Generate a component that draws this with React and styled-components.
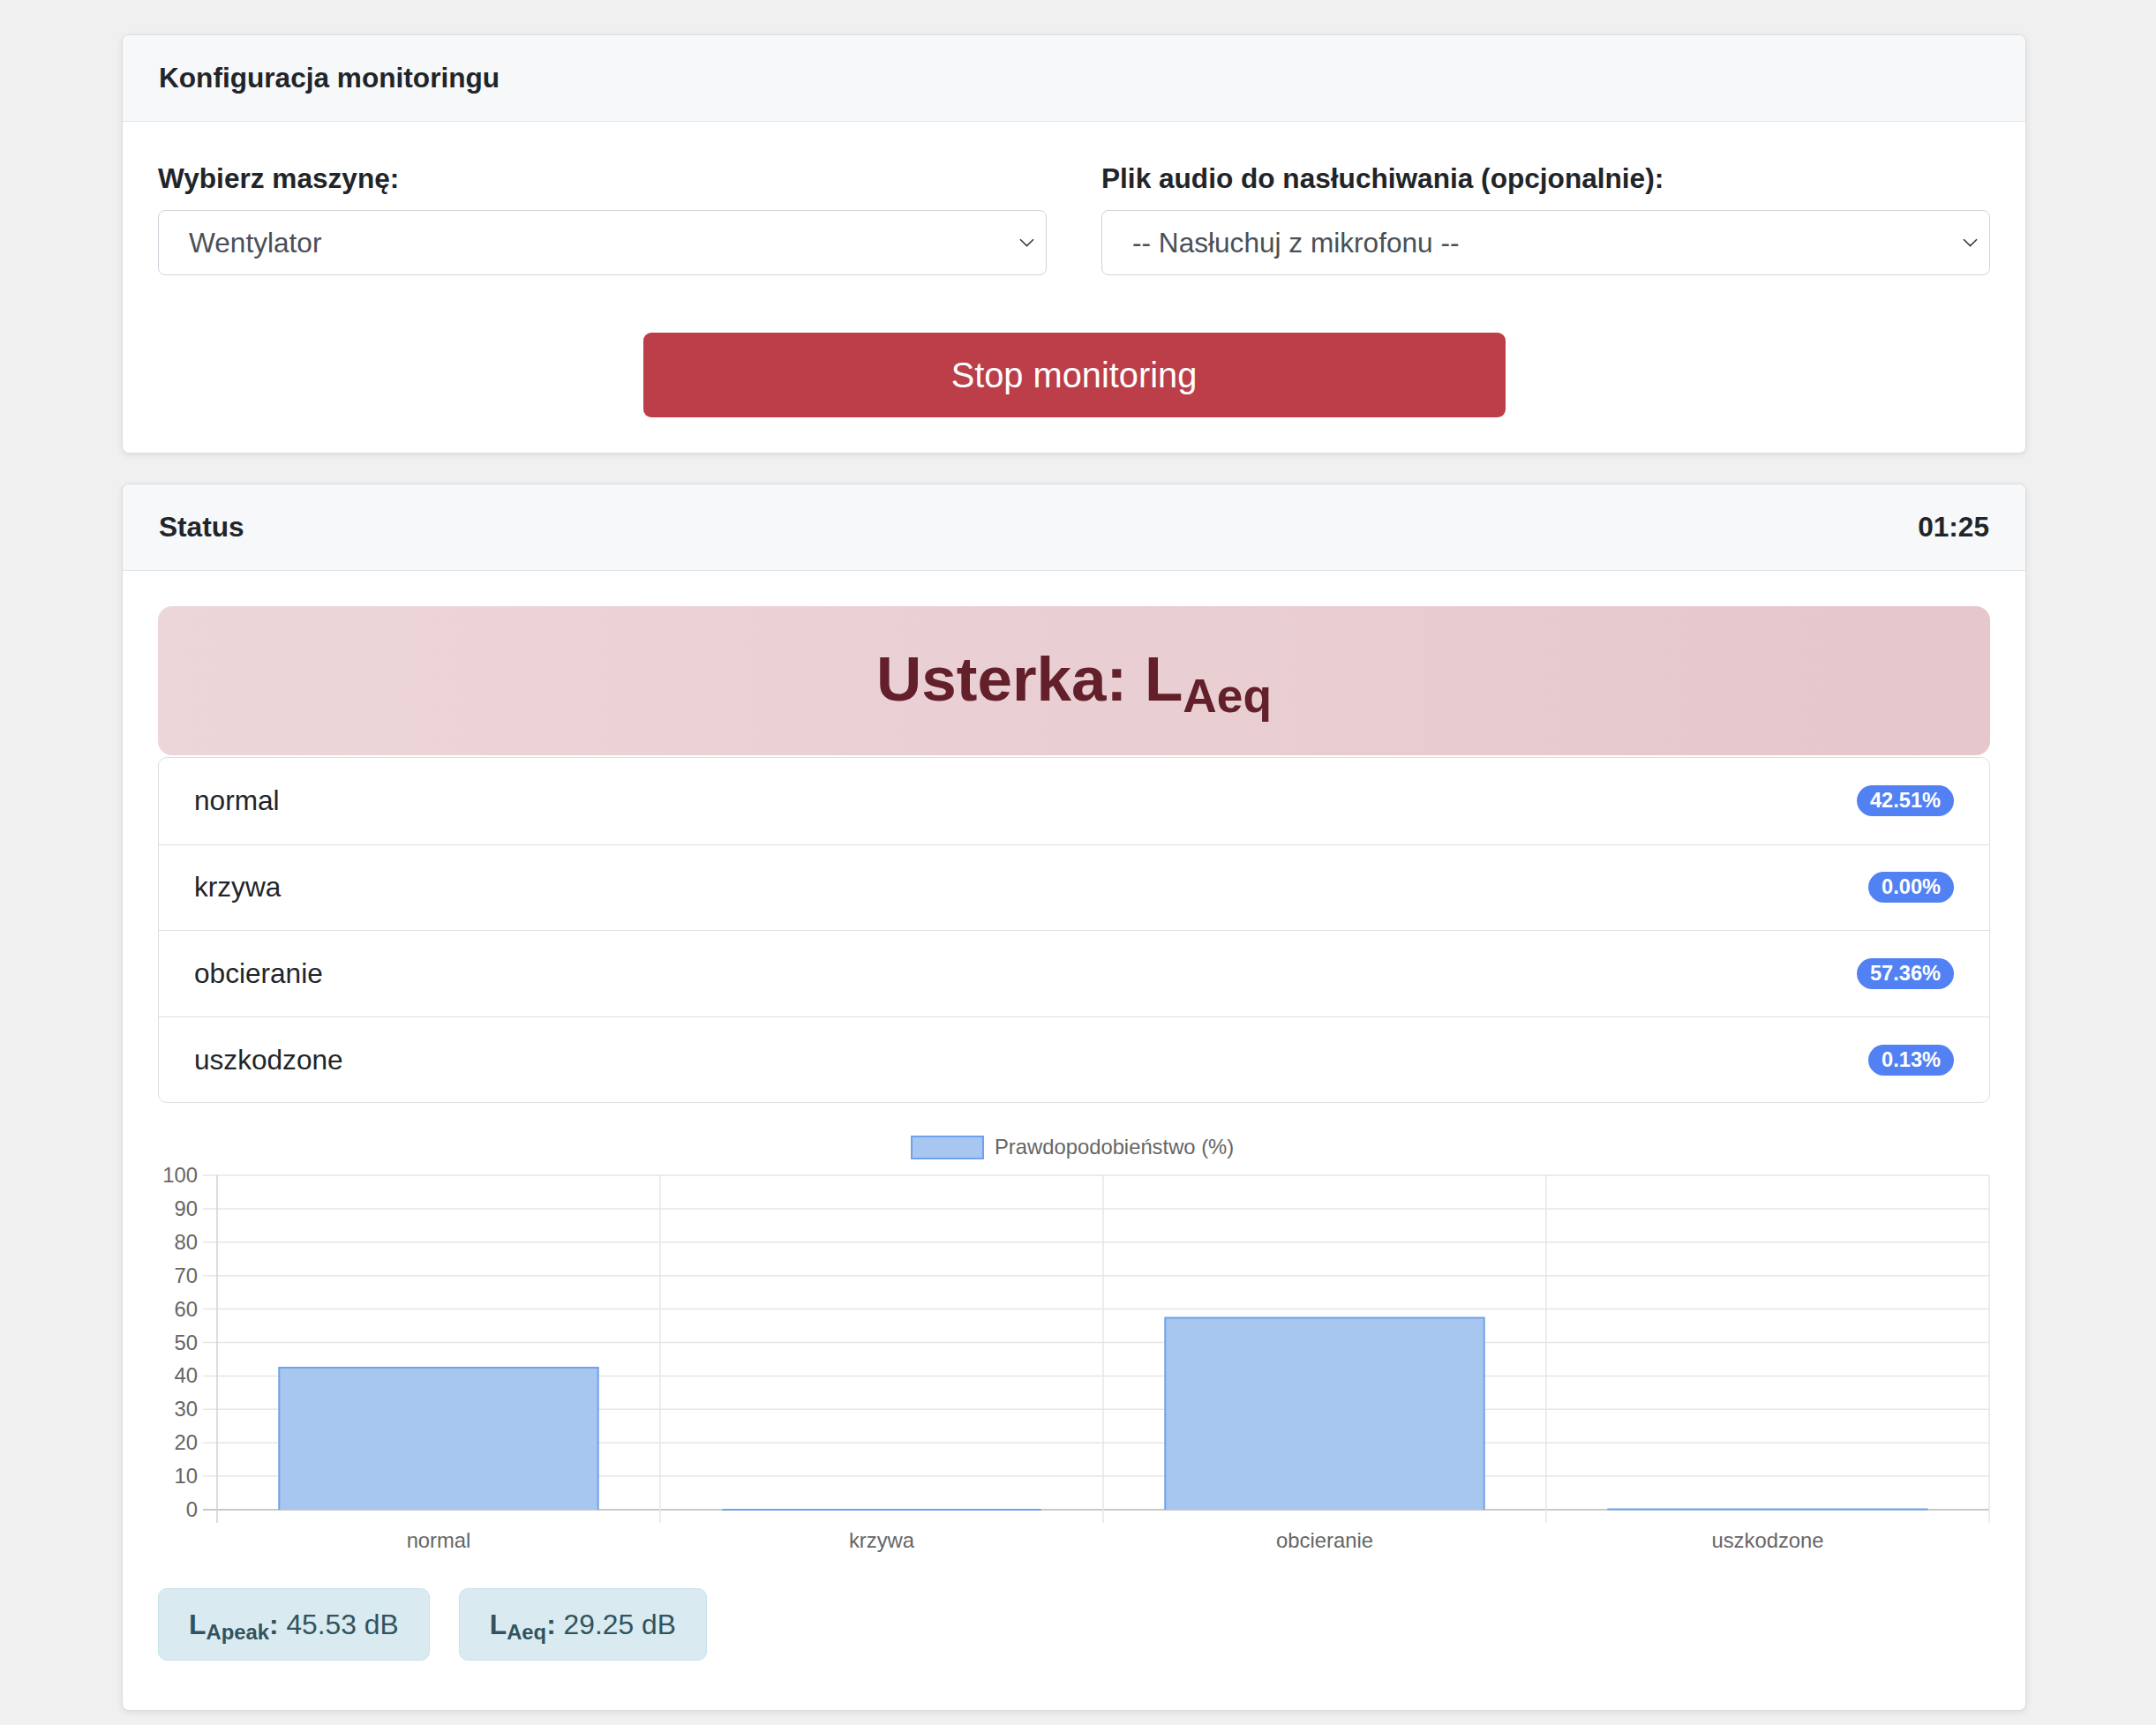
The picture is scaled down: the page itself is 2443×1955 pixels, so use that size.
import React from 'react';
import styled, { createGlobalStyle } from 'styled-components';

const BASE = '31.6px';

const GlobalStyle = createGlobalStyle`
  html, body {
    margin: 0;
    padding: 0;
    background: #f0f0f0;
  }
  body {
    font-family: 'Liberation Sans', Arial, sans-serif;
    font-size: ${BASE};
    color: #212529;
  }
  * {
    box-sizing: border-box;
  }
`;

const Page = styled.div`
  padding: 39px 9px 40px 0;
`;

const Container = styled.div`
  width: 2158px;
  margin: 0 auto;
  display: flex;
  flex-direction: column;
  gap: 34px;
`;

const Card = styled.section`
  background: #fff;
  border: 1.5px solid #dcdcdc;
  border-radius: 8px;
  box-shadow: 0 2px 7px rgba(0, 0, 0, 0.08);
  overflow: hidden;
`;

const CardHeader = styled.header`
  height: 98px;
  padding: 0 41px;
  display: flex;
  align-items: center;
  justify-content: space-between;
  background: #f7f8fa;
  border-bottom: 1.5px solid #e1e3e6;
  font-weight: 700;
  font-size: ${BASE};
  color: #212529;
`;

const CardBody = styled.div`
  padding: ${props => (props.bottom ? `40px 40px ${props.bottom}` : '40px')};
`;

const FormRow = styled.div`
  display: grid;
  grid-template-columns: 1fr 1fr;
  column-gap: 62px;
`;

const Field = styled.div`
  display: flex;
  flex-direction: column;
`;

const Label = styled.label`
  font-weight: 700;
  line-height: 47px;
  margin-bottom: 12px;
  padding-top: 1px;
`;

const SelectBox = styled.div`
  height: 74px;
  display: flex;
  align-items: center;
  justify-content: space-between;
  padding: 0 13px 0 34px;
  border: 1.5px solid #ced4da;
  border-radius: 8px;
  background: #fff;
  color: #495057;
  font-size: ${BASE};
`;

const Chevron = () => (
  <svg width="17" height="10" viewBox="0 0 17 10" fill="none">
    <path d="M1 1.2 L8.5 8.6 L16 1.2" stroke="#343a40" strokeWidth="1.6" />
  </svg>
);

const ButtonRow = styled.div`
  display: flex;
  justify-content: center;
  margin-top: 65px;
`;

const StopButton = styled.button`
  width: 977px;
  height: 96px;
  border: none;
  border-radius: 9px;
  background: #bb3e48;
  color: #fff;
  font-family: 'Liberation Sans', Arial, sans-serif;
  font-size: 39.8px;
  cursor: pointer;
`;

const Alert = styled.div`
  height: 169px;
  display: flex;
  align-items: center;
  justify-content: center;
  border-radius: 16px;
  background: linear-gradient(90deg, #edd6d9 0%, #e9cfd3 50%, #e6c7cb 100%);
  color: #63202a;
  font-weight: 700;
  font-size: 71px;
  line-height: 1;
  padding-bottom: 4px;
`;

const Sub = styled.sub`
  position: relative;
  bottom: -0.25em;
  font-size: 0.75em;
  line-height: 0;
  vertical-align: baseline;
`;

const List = styled.ul`
  list-style: none;
  margin: 2px 0 0;
  padding: 0;
  border: 1.5px solid #dfdfdf;
  border-radius: 10px;
`;

const Row = styled.li`
  height: 97.6px;
  display: flex;
  align-items: center;
  justify-content: space-between;
  padding: 0 40px;
  & + & {
    border-top: 1.5px solid #dfdfdf;
  }
`;

const Pill = styled.span`
  padding: 6px 15px;
  border-radius: 20px;
  background: #5281f4;
  color: #fff;
  font-weight: 700;
  font-size: 23.6px;
  line-height: 23px;
`;

const ChartWrap = styled.div`
  margin-top: 12px;
  height: 510px;
`;

const ChartSvg = styled.svg`
  display: block;
  overflow: visible;
  font-family: 'Liberation Sans', Arial, sans-serif;
`;

const Readings = styled.div`
  display: flex;
  gap: 33px;
  margin-top: 28px;
`;

const Reading = styled.div`
  padding: 16px 34px;
  border: 1.5px solid #c7e2ea;
  border-radius: 10px;
  background: #d9ebf1;
  color: #31535f;
  font-size: 31.8px;
  line-height: 48px;
`;

const ReadingName = styled.strong`
  font-weight: 700;
`;

const classes = [
  { name: 'normal', value: 42.51 },
  { name: 'krzywa', value: 0.0 },
  { name: 'obcieranie', value: 57.36 },
  { name: 'uszkodzone', value: 0.13 },
];

const PLOT = { left: 67, right: 2075, top: 70, bottom: 449 };
const STEP = (PLOT.bottom - PLOT.top) / 10;
const COL = (PLOT.right - PLOT.left) / classes.length;
const BAR_W = COL * 0.72;
const FILL = '#a8c7f0';
const EDGE = '#6fa2ea';

const ProbabilityChart = () => (
  <ChartSvg width="2075" height="510" viewBox="0 0 2075 510">
    <rect x="854" y="26" width="81" height="25" fill={FILL} stroke={EDGE} strokeWidth="2" />
    <text x="948" y="46" fontSize="23.8" fill="#666">
      Prawdopodobieństwo (%)
    </text>

    {Array.from({ length: 11 }, (_, i) => {
      const y = PLOT.bottom - i * STEP;
      return (
        <g key={i}>
          <line
            x1="51"
            x2={PLOT.right}
            y1={y}
            y2={y}
            stroke={i === 0 ? '#c9c9c9' : '#e6e6e6'}
            strokeWidth={i === 0 ? 2 : 1.5}
          />
          <text x="45" y={y + 8} fontSize="23.8" fill="#666" textAnchor="end">
            {i * 10}
          </text>
        </g>
      );
    })}

    {Array.from({ length: classes.length + 1 }, (_, k) => {
      const x = PLOT.left + k * COL;
      return (
        <line
          key={k}
          x1={x}
          x2={x}
          y1={PLOT.top}
          y2="464"
          stroke={k === 0 ? '#d2d2d2' : '#e6e6e6'}
          strokeWidth="1.5"
        />
      );
    })}

    {classes.map((c, k) => {
      const cx = PLOT.left + COL / 2 + k * COL;
      const x = cx - BAR_W / 2;
      const h = (c.value * (PLOT.bottom - PLOT.top)) / 100;
      const y = PLOT.bottom - h;
      return (
        <g key={c.name}>
          <rect x={x} y={y} width={BAR_W} height={h} fill={FILL} />
          <path
            d={`M${x} ${PLOT.bottom} L${x} ${y} L${x + BAR_W} ${y} L${x + BAR_W} ${PLOT.bottom}`}
            fill="none"
            stroke={EDGE}
            strokeWidth="2"
          />
          <text x={cx} y="492" fontSize="23.8" fill="#666" textAnchor="middle">
            {c.name}
          </text>
        </g>
      );
    })}
  </ChartSvg>
);

const App = () => (
  <Page>
    <GlobalStyle />
    <Container>
      <Card>
        <CardHeader>Konfiguracja monitoringu</CardHeader>
        <CardBody>
          <FormRow>
            <Field>
              <Label>Wybierz maszynę:</Label>
              <SelectBox>
                <span>Wentylator</span>
                <Chevron />
              </SelectBox>
            </Field>
            <Field>
              <Label>Plik audio do nasłuchiwania (opcjonalnie):</Label>
              <SelectBox>
                <span>-- Nasłuchuj z mikrofonu --</span>
                <Chevron />
              </SelectBox>
            </Field>
          </FormRow>
          <ButtonRow>
            <StopButton>Stop monitoring</StopButton>
          </ButtonRow>
        </CardBody>
      </Card>

      <Card>
        <CardHeader>
          <span>Status</span>
          <span>01:25</span>
        </CardHeader>
        <CardBody bottom="56px">
          <Alert>
            <span>
              Usterka: L<Sub>Aeq</Sub>
            </span>
          </Alert>
          <List>
            {classes.map(c => (
              <Row key={c.name}>
                <span>{c.name}</span>
                <Pill>{c.value.toFixed(2)}%</Pill>
              </Row>
            ))}
          </List>
          <ChartWrap>
            <ProbabilityChart />
          </ChartWrap>
          <Readings>
            <Reading>
              <ReadingName>
                L<Sub>Apeak</Sub>:
              </ReadingName>{' '}
              45.53 dB
            </Reading>
            <Reading>
              <ReadingName>
                L<Sub>Aeq</Sub>:
              </ReadingName>{' '}
              29.25 dB
            </Reading>
          </Readings>
        </CardBody>
      </Card>
    </Container>
  </Page>
);

export default App;
